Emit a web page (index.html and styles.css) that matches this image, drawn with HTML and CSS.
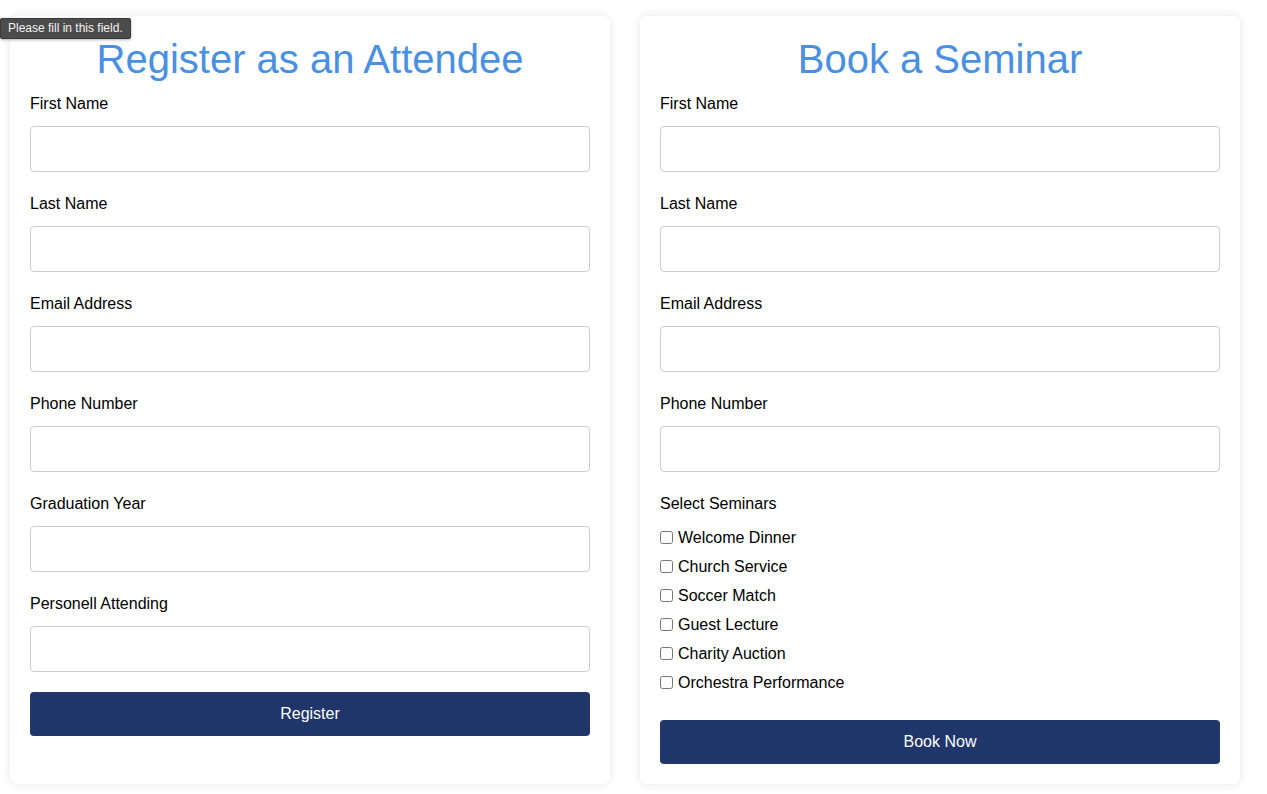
FILE: index.html
```html
<!DOCTYPE html>
<html lang="en">
<head>
<meta charset="utf-8">
<title>Register and Book</title>
<link rel="stylesheet" href="styles.css">
</head>
<body>
<div class="tooltip">Please fill in this field.</div>
<main class="page">
  <form class="card">
    <h1 class="card-title">Register as an Attendee</h1>
    <div class="field">
      <label class="field-label">First Name</label>
      <input class="field-input" type="text">
    </div>
    <div class="field">
      <label class="field-label">Last Name</label>
      <input class="field-input" type="text">
    </div>
    <div class="field">
      <label class="field-label">Email Address</label>
      <input class="field-input" type="email">
    </div>
    <div class="field">
      <label class="field-label">Phone Number</label>
      <input class="field-input" type="tel">
    </div>
    <div class="field">
      <label class="field-label">Graduation Year</label>
      <input class="field-input" type="text">
    </div>
    <div class="field field-last">
      <label class="field-label">Personell Attending</label>
      <input class="field-input" type="text">
    </div>
    <button class="submit" type="button">Register</button>
  </form>

  <form class="card">
    <h1 class="card-title">Book a Seminar</h1>
    <div class="field">
      <label class="field-label">First Name</label>
      <input class="field-input" type="text">
    </div>
    <div class="field">
      <label class="field-label">Last Name</label>
      <input class="field-input" type="text">
    </div>
    <div class="field">
      <label class="field-label">Email Address</label>
      <input class="field-input" type="email">
    </div>
    <div class="field">
      <label class="field-label">Phone Number</label>
      <input class="field-input" type="tel">
    </div>
    <div class="seminars">
      <div class="field-label seminars-title">Select Seminars</div>
      <label class="check"><input class="check-box" type="checkbox"> Welcome Dinner</label>
      <label class="check"><input class="check-box" type="checkbox"> Church Service</label>
      <label class="check"><input class="check-box" type="checkbox"> Soccer Match</label>
      <label class="check"><input class="check-box" type="checkbox"> Guest Lecture</label>
      <label class="check"><input class="check-box" type="checkbox"> Charity Auction</label>
      <label class="check"><input class="check-box" type="checkbox"> Orchestra Performance</label>
    </div>
    <button class="submit" type="button">Book Now</button>
  </form>
</main>
</body>
</html>
```

FILE: styles.css
```css
* {
  box-sizing: border-box;
}

html, body {
  margin: 0;
  padding: 0;
  background: #ffffff;
}

body {
  font-family: "Liberation Sans", Arial, sans-serif;
  color: #000000;
  font-size: 16px;
}

.page {
  display: flex;
  gap: 30px;
  padding: 16px 10px 10px 10px;
  align-items: stretch;
}

.card {
  width: 600px;
  background: #ffffff;
  border-radius: 8px;
  box-shadow: 0 0 10px rgba(0, 0, 0, 0.1);
  padding: 20px;
  display: flex;
  flex-direction: column;
}

.card-title {
  margin: 0 0 12px 0;
  font-size: 40px;
  font-weight: normal;
  line-height: 46px;
  text-align: center;
  color: #4a90e2;
}

.field {
  display: flex;
  flex-direction: column;
  margin-bottom: 22px;
}

.field-last {
  margin-bottom: 20px;
}

.field-label {
  display: block;
  font-size: 16px;
  line-height: 20px;
  margin-bottom: 12px;
}

.field-input {
  height: 46px;
  width: 100%;
  border: 1px solid #cccccc;
  border-radius: 4px;
  padding: 12px;
  font-size: 16px;
  font-family: inherit;
  background: #ffffff;
}

.seminars {
  display: flex;
  flex-direction: column;
  margin-bottom: 23px;
}

.seminars-title {
  margin-bottom: 9px;
}

.check {
  display: flex;
  align-items: center;
  height: 29px;
  font-size: 16px;
}

.check-box {
  width: 13px;
  height: 13px;
  margin: 0 5px 0 0;
}

.submit {
  height: 44px;
  width: 100%;
  border: none;
  border-radius: 4px;
  background: #203569;
  color: #ffffff;
  font-family: inherit;
  font-size: 16px;
  cursor: pointer;
}

.tooltip {
  position: absolute;
  left: 0;
  top: 18px;
  height: 21px;
  padding: 0 7px;
  background: #4c4c4c;
  border: 1px solid #3a3a3a;
  border-radius: 2px;
  box-shadow: 0 1px 3px rgba(0, 0, 0, 0.3);
  color: #f2f2f2;
  font-family: "Liberation Sans", Arial, sans-serif;
  font-size: 12px;
  line-height: 19px;
  z-index: 10;
}
```
